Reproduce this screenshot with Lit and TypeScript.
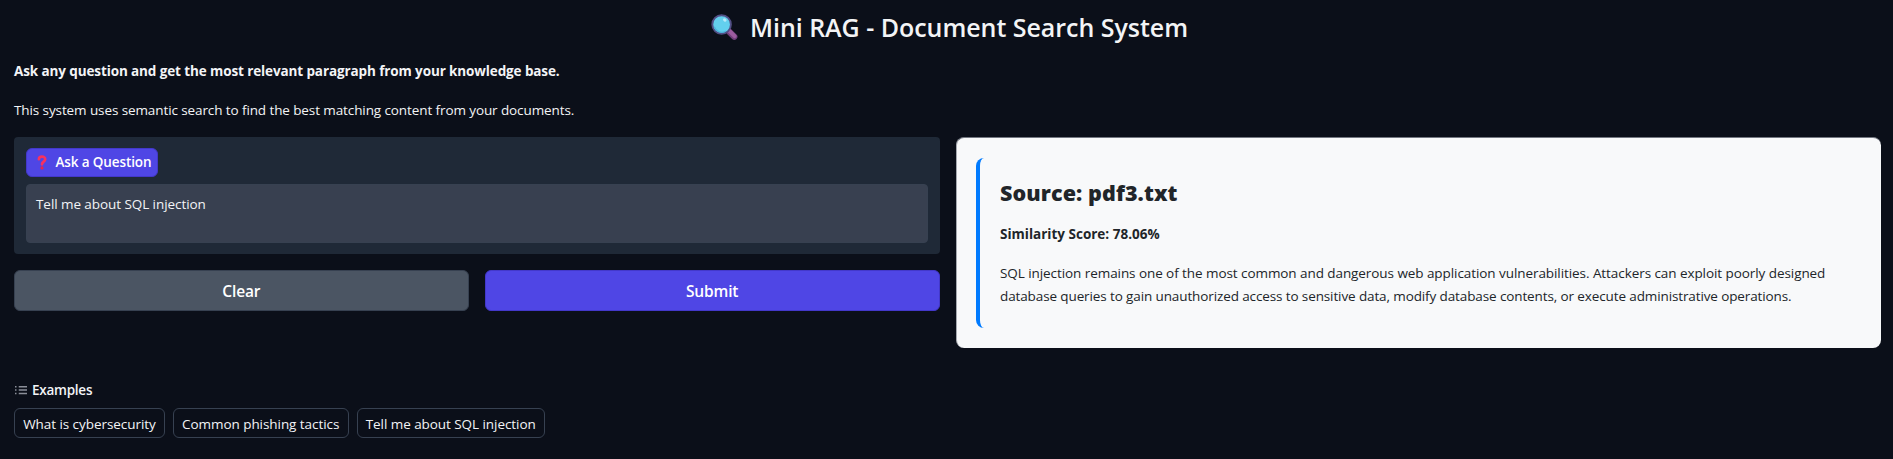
import { LitElement, html, css } from "lit";
import { customElement, state } from "lit/decorators.js";

@customElement("app-root")
export class AppRoot extends LitElement {
  @state() private question = "Tell me about SQL injection";

  private examples = ["What is cybersecurity", "Common phishing tactics", "Tell me about SQL injection"];

  static styles = css`
    :host {
      display: block;
      box-sizing: border-box;
      min-height: 100vh;
      padding: 9px 12px 0 14px;
      background: #0b0f19;
      color: #f3f4f6;
      font: 13.5px/20px "Open Sans", "Noto Sans", sans-serif;
    }
    * { box-sizing: border-box; margin: 0; }
    .title {
      display: flex;
      align-items: center;
      justify-content: center;
      gap: 12px;
      font-size: 25px;
      line-height: 36px;
      font-weight: 600;
      padding-left: 4px;
    }
    .title svg { width: 27px; height: 27px; }
    .title span { letter-spacing: -0.03px; }
    .lead { margin-top: 16px; font-weight: 700; letter-spacing: -0.11px; }
    .sub { margin-top: 19px; letter-spacing: -0.1px; }
    .grid {
      display: grid;
      grid-template-columns: 1fr 1fr;
      gap: 16px;
      margin-top: 17px;
      align-items: start;
    }
    .panel { background: #1f2937; border-radius: 4px; padding: 11px 12px; height: 117.3px; }
    .label {
      display: flex;
      align-items: center;
      gap: 9px;
      width: 131.5px;
      height: 28.7px;
      padding: 0 0 0 9.5px;
      border-radius: 6px;
      background: #4f46e5;
      border: 1px solid #4338ca;
      color: #fff;
      font-weight: 650;
      letter-spacing: -0.12px;
      white-space: nowrap;
    }
    .label svg { width: 10px; height: 15px; flex: none; }
    .input {
      display: block;
      width: 100%;
      height: 59px;
      margin-top: 7.8px;
      padding: 8.5px 9px;
      resize: none;
      border: 1px solid #374151;
      border-radius: 4px;
      background: #384050;
      color: #f3f4f6;
      font: inherit;
      letter-spacing: -0.07px;
      outline: none;
      overflow: hidden;
    }
    .buttons { display: grid; grid-template-columns: 1fr 1fr; gap: 16px; margin-top: 15.7px; }
    .btn {
      height: 41px;
      border-radius: 6px;
      border: 1px solid #374151;
      background: #4b5563;
      color: #fff;
      font: 600 15.5px/24px "Open Sans", "Noto Sans", sans-serif;
      letter-spacing: -0.15px;
      padding: 1.5px 0 0;
    }
    .primary { background: #4f46e5; border-color: #4338ca; }
    .card {
      height: 211px;
      border-radius: 8px;
      background: #f8f9fa;
      border-top: 1px solid #737781;
      border-left: 1px solid #a5a8af;
      padding: 19.5px 20px 20px 19.5px;
      color: #212529;
    }
    .result { border-left: 4px solid #007bff; border-radius: 8px; padding: 20px 20px 19.5px; line-height: 23.2px; }
    .source { font-size: 21.5px; line-height: 30px; font-weight: 800; letter-spacing: 0.1px; }
    .score { margin-top: 15.6px; font-weight: 700; }
    .text { margin-top: 15.7px; white-space: nowrap; }
    .line { display: block; letter-spacing: -0.07px; }
    .line + .line { letter-spacing: -0.115px; }
    .exhead {
      display: flex;
      align-items: center;
      gap: 5px;
      margin-top: 31.7px;
      font-weight: 650;
      letter-spacing: -0.25px;
    }
    .exhead svg { width: 12px; height: 12px; margin-left: 1px; }
    .chips { display: flex; gap: 8px; margin-top: 8.6px; }
    .chip {
      height: 29.5px;
      padding: 1px 8.2px 0;
      border: 1px solid #374151;
      border-radius: 6px;
      background: transparent;
      color: #f3f4f6;
      font: inherit;
      letter-spacing: -0.06px;
    }
  `;

  render() {
    return html`
      <h1 class="title">
        <svg viewBox="0 0 27 27">
          <path d="M18 17.5 L23.3 22.8" stroke="#71407b" stroke-width="6.2" stroke-linecap="round" />
          <path d="M18.4 17 L23.6 22.2" stroke="#9b5c9e" stroke-width="4" stroke-linecap="round" />
          <circle cx="10.6" cy="10.5" r="9.3" fill="#63d0ee" stroke="#524f86" stroke-width="1.9" />
          <path d="M3.3 12.8 A7.8 7.8 0 0 0 15 17" fill="none" stroke="#4cb5dc" stroke-width="1.2" />
          <ellipse cx="13.8" cy="5.9" rx="1.9" ry="1.5" fill="#b8eafa" transform="rotate(35 13.8 5.9)" />
        </svg>
        <span>Mini RAG - Document Search System</span>
      </h1>
      <p class="lead">Ask any question and get the most relevant paragraph from your knowledge base.</p>
      <p class="sub">This system uses semantic search to find the best matching content from your documents.</p>
      <div class="grid">
        <div>
          <div class="panel">
            <div class="label">
              <svg viewBox="0 0 10 15">
                <path d="M1.9 4.2 C1.9 0.8 8.2 0.7 8.2 4.2 C8.2 6.6 5 6.6 5 9.3" fill="none" stroke="#f8315f" stroke-width="2.7" stroke-linecap="round" />
                <circle cx="5" cy="12.9" r="1.6" fill="#e5264c" />
              </svg>
              <span>Ask a Question</span>
            </div>
            <textarea
              class="input"
              spellcheck="false"
              .value=${this.question}
              @input=${(e: Event) => (this.question = (e.target as HTMLTextAreaElement).value)}
            ></textarea>
          </div>
          <div class="buttons">
            <button class="btn" @click=${() => (this.question = "")}>Clear</button>
            <button class="btn primary">Submit</button>
          </div>
        </div>
        <div class="card">
          <div class="result">
            <h2 class="source">Source: pdf3.txt</h2>
            <p class="score">Similarity Score: 78.06%</p>
            <p class="text">
              <span class="line">SQL injection remains one of the most common and dangerous web application vulnerabilities. Attackers can exploit poorly designed</span>
              <span class="line">database queries to gain unauthorized access to sensitive data, modify database contents, or execute administrative operations.</span>
            </p>
          </div>
        </div>
      </div>
      <div class="exhead">
        <svg viewBox="0 0 32 32" fill="#8b8f99">
          <path d="M10 5h22v4H10zM10 14h22v4H10zM10 23h22v4H10zM0 5h4v4H0zM0 14h4v4H0zM0 23h4v4H0z" />
        </svg>
        <span>Examples</span>
      </div>
      <div class="chips">
        ${this.examples.map(
          (t) => html`<button class="chip" @click=${() => (this.question = t)}>${t}</button>`
        )}
      </div>
    `;
  }
}
